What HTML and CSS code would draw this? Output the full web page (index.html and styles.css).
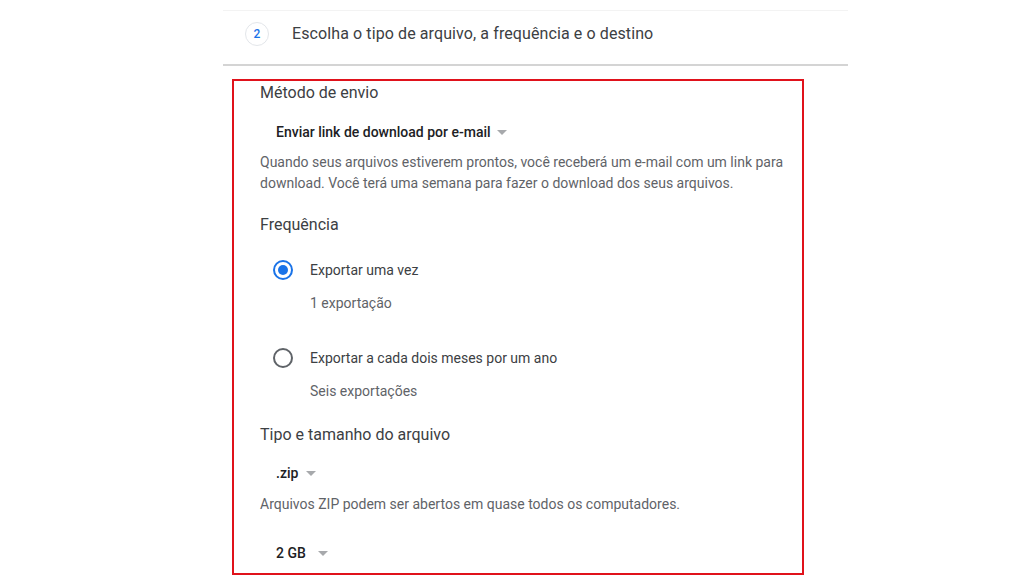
FILE: index.html
```html
<!DOCTYPE html>
<html lang="pt-BR">
<head>
    <meta charset="UTF-8">
    <meta name="viewport" content="width=device-width, initial-scale=1.0">
    <title>Escolha o tipo de arquivo</title>
    <link rel="stylesheet" href="styles.css">
</head>
<body>

    <div class="page">
        <div class="step-header">
            <span class="step-num">2</span>
            <span class="step-title">Escolha o tipo de arquivo, a frequência e o destino</span>
        </div>

        <div class="options">
            <h3 class="section-title">Método de envio</h3>
            <div class="dropdown dropdown-first">Enviar link de download por e-mail <span class="arrow"></span></div>
            <p class="desc desc-first">Quando seus arquivos estiverem prontos, você receberá um e-mail com um link para download. Você terá uma semana para fazer o download dos seus arquivos.</p>

            <h3 class="section-title freq-title">Frequência</h3>
            <div class="radio-row radio-first">
                <span class="radio checked"></span>
                <span class="radio-label">Exportar uma vez</span>
            </div>
            <div class="radio-sub">1 exportação</div>
            <div class="radio-row radio-second">
                <span class="radio"></span>
                <span class="radio-label">Exportar a cada dois meses por um ano</span>
            </div>
            <div class="radio-sub">Seis exportações</div>

            <h3 class="section-title type-title">Tipo e tamanho do arquivo</h3>
            <div class="dropdown dropdown-zip">.zip <span class="arrow"></span></div>
            <p class="desc desc-zip">Arquivos ZIP podem ser abertos em quase todos os computadores.</p>
            <div class="dropdown dropdown-size">2 GB <span class="arrow"></span></div>
        </div>
    </div>

</body>
</html>
```

FILE: styles.css
```css
body {
    font-family: Roboto, "Noto Sans", Arial, sans-serif;
    background: #ffffff;
    margin: 0;
    padding: 0;
}
.page {
    width: 625px;
    margin-left: 223px;
    padding-top: 10px;
}
.step-header {
    display: flex;
    align-items: flex-start;
    border-top: 1px solid #f3f3f3;
    border-bottom: 2px solid #d4d4d4;
    box-sizing: border-box;
    height: 56px;
    padding-top: 11px;
}
.step-num {
    width: 22px;
    height: 22px;
    margin-left: 22px;
    border: 1px solid #e3e6ea;
    border-radius: 50%;
    color: #1a73e8;
    font-size: 12px;
    font-weight: 500;
    display: flex;
    align-items: center;
    justify-content: center;
}
.step-title {
    margin-left: 23px;
    font-size: 16px;
    line-height: 24px;
    color: #3c4043;
    letter-spacing: 0.1px;
}
.options {
    margin: 13px 0 0 9px;
    width: 572px;
    box-sizing: border-box;
    border: 2px solid #e0121b;
    padding: 2px 8px 10px 26px;
}
.section-title {
    margin: 0;
    font-size: 16px;
    font-weight: 400;
    line-height: 20px;
    color: #3c4043;
}
.freq-title {
    margin-top: 21px;
}
.type-title {
    margin-top: 24px;
}
.dropdown {
    margin-left: 16px;
    font-size: 14px;
    font-weight: 500;
    line-height: 20px;
    color: #202124;
    display: flex;
    align-items: center;
}
.dropdown-first {
    margin-top: 19px;
}
.dropdown-zip {
    margin-top: 18px;
}
.dropdown-size {
    margin-top: 28px;
}
.arrow {
    width: 0;
    height: 0;
    margin-left: 8px;
    border-left: 5px solid transparent;
    border-right: 5px solid transparent;
    border-top: 5px solid #a7a9ac;
}
.dropdown-first .arrow {
    margin-left: 6px;
}
.dropdown-size .arrow {
    margin-left: 12px;
}
.desc {
    margin: 0;
    font-size: 14px;
    line-height: 21px;
    color: #5f6368;
}
.desc-first {
    margin-top: 10px;
}
.desc-zip {
    margin-top: 11px;
}
.radio-row {
    display: flex;
    align-items: center;
    height: 20px;
    margin-left: 13px;
}
.radio-first {
    margin-top: 25px;
}
.radio-second {
    margin-top: 35px;
}
.radio {
    width: 20px;
    height: 20px;
    box-sizing: border-box;
    border: 2px solid #5f6368;
    border-radius: 50%;
    display: flex;
    align-items: center;
    justify-content: center;
}
.radio.checked {
    border-color: #1a73e8;
}
.radio.checked::after {
    content: "";
    width: 10px;
    height: 10px;
    border-radius: 50%;
    background: #1a73e8;
}
.radio-label {
    margin-left: 17px;
    font-size: 14px;
    line-height: 20px;
    color: #3c4043;
}
.radio-sub {
    margin: 13px 0 0 50px;
    font-size: 14px;
    line-height: 20px;
    color: #5f6368;
}
```
